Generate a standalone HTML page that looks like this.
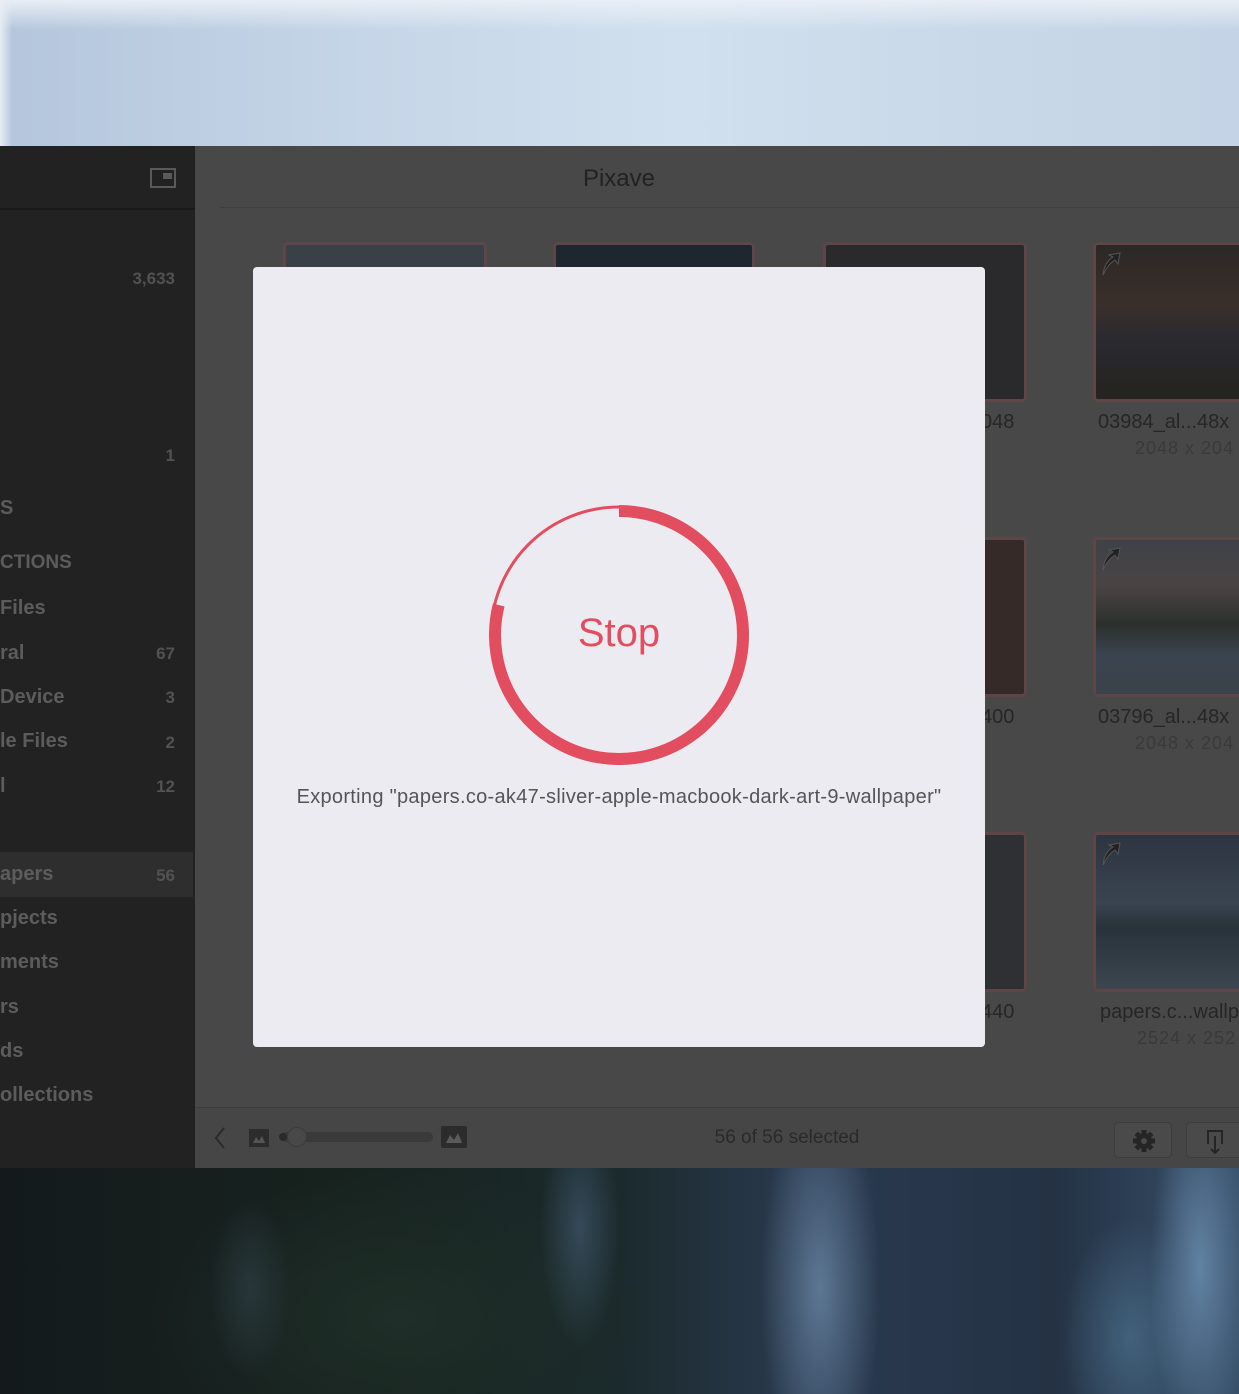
<!DOCTYPE html>
<html><head><meta charset="utf-8"><style>
*{margin:0;padding:0;box-sizing:border-box}
body{width:1239px;height:1394px;overflow:hidden;position:relative;font-family:"Liberation Sans",Helvetica,sans-serif;background:#1a2226}
.top{position:absolute;left:0;top:0;width:1239px;height:146px;background:linear-gradient(90deg,#b4c6dc 0%,#c6d6e8 30%,#d0e0ee 55%,#c8d8e8 80%,#c4d4e6 100%)}
.top:before{content:"";position:absolute;left:0;top:0;right:0;height:30px;background:linear-gradient(#e8eef6,rgba(232,238,246,0))}
.top:after{content:"";position:absolute;left:0;top:0;bottom:0;width:12px;background:linear-gradient(90deg,#e8edf3,rgba(232,238,246,0))}
.bot{position:absolute;left:0;top:1168px;width:1239px;height:226px;overflow:hidden;
background:
radial-gradient(ellipse 60px 200px at 820px 120px,rgba(110,140,170,.75),transparent),
radial-gradient(ellipse 50px 180px at 1200px 100px,rgba(110,145,180,.8),transparent),
radial-gradient(ellipse 70px 120px at 1130px 170px,rgba(80,120,150,.6),transparent),
radial-gradient(ellipse 40px 120px at 580px 60px,rgba(70,95,120,.6),transparent),
radial-gradient(ellipse 40px 90px at 250px 120px,rgba(50,65,75,.6),transparent),
radial-gradient(ellipse 250px 150px at 400px 150px,#1f2e28,transparent),
linear-gradient(90deg,#141a1c 0%,#17231f 30%,#1b2a2c 50%,#2a3a50 65%,#243244 85%,#38506a 100%)}
.sb{position:absolute;left:0;top:146px;width:195px;height:1022px;background:#222222}
.sb .hdr{position:absolute;left:0;top:62px;width:195px;height:2px;background:#1a1a1a}
.sb .t{position:absolute;left:0;color:#5c5c5c;font-size:20px;white-space:nowrap;font-weight:bold}
.sb .n{position:absolute;right:20px;color:#525252;font-size:17px;font-weight:bold}
.sb .sel{position:absolute;left:0;top:706px;width:193px;height:45px;background:#2e2e2e}
.main{position:absolute;left:195px;top:146px;width:1044px;height:1022px;background:#484848}
.title{position:absolute;left:0;top:0;width:848px;height:62px;text-align:center;line-height:66px;font-size:24px;color:#222}
.line{position:absolute;left:25px;right:0;top:61px;height:1px;background:#3e3e3e}
.bbar{position:absolute;left:0;top:961px;width:100%;height:61px;background:#464646;border-top:1px solid #3c3c3c}
.th{position:absolute;border:3px solid #5e4548;border-radius:5px;background:#2e2f32}
.lbl{position:absolute;font-size:20px;color:#262626;white-space:nowrap}
.dim{position:absolute;font-size:18px;color:#3a3a3a;white-space:nowrap;letter-spacing:1px}
.modal{position:absolute;left:253px;top:267px;width:732px;height:780px;background:#ecebf1;border-radius:4px}
.exp{position:absolute;left:0;width:100%;top:519px;text-align:center;font-size:20px;color:#555;letter-spacing:.3px;white-space:nowrap}
.btn{position:absolute;top:14px;width:58px;height:36px;border:1px solid #3c3c3c;border-radius:5px;background:#4a4a4a}
</style></head><body>
<div class="top"></div>
<div class="bot"></div>
<div class="sb">
 <svg style="position:absolute;left:150px;top:22px" width="26" height="20"><rect x="1" y="1" width="24" height="18" fill="none" stroke="#5a5a5a" stroke-width="2"/><rect x="13" y="5" width="9" height="6" fill="#5a5a5a"/></svg>
 <div class="hdr"></div>
 <div class="n" style="top:123px">3,633</div>
 <div class="n" style="top:300px">1</div>
 <div class="t" style="top:351px">S</div>
 <div class="t" style="top:406px;font-size:19px">CTIONS</div>
 <div class="t" style="top:451px">Files</div>
 <div class="t" style="top:496px">ral</div><div class="n" style="top:498px">67</div>
 <div class="t" style="top:540px">Device</div><div class="n" style="top:542px">3</div>
 <div class="t" style="top:584px">le Files</div><div class="n" style="top:587px">2</div>
 <div class="t" style="top:629px">l</div><div class="n" style="top:631px">12</div>
 <div class="sel"></div>
 <div class="t" style="top:717px">apers</div><div class="n" style="top:720px">56</div>
 <div class="t" style="top:761px">pjects</div>
 <div class="t" style="top:805px">ments</div>
 <div class="t" style="top:850px">rs</div>
 <div class="t" style="top:894px">ds</div>
 <div class="t" style="top:938px">ollections</div>
</div>
<div class="main">
 <div class="title">Pixave</div>
 <div class="line"></div>
 <div class="th" style="left:88px;top:96px;width:204px;height:160px;background:#3a4048"></div>
 <div class="th" style="left:358px;top:96px;width:202px;height:160px;background:#1e2630"></div>
 <div class="th" style="left:628px;top:96px;width:204px;height:160px;background:#2a2a2c"></div>
 <div class="th" style="left:628px;top:391px;width:204px;height:160px;background:#352a28"></div>
 <div class="th" style="left:628px;top:686px;width:204px;height:160px;background:#2e3034"></div>
 <div class="lbl" style="left:786px;top:265px">048</div>
 <div class="lbl" style="left:786px;top:560px">400</div>
 <div class="lbl" style="left:786px;top:855px">440</div>
 <div class="th" style="left:898px;top:96px;width:170px;height:160px;background:linear-gradient(#2c2826 0%,#3a2f2a 40%,#2a2a30 60%,#25231f 100%)"></div>
 <div class="th" style="left:898px;top:391px;width:170px;height:160px;background:linear-gradient(#3e4248 0%,#4a4444 30%,#2b302c 55%,#3a4450 75%,#3a424a 100%)"></div>
 <div class="th" style="left:898px;top:686px;width:170px;height:160px;background:linear-gradient(#2c3540 0%,#3a4450 45%,#28323a 60%,#3c4650 100%)"></div>
 <svg style="position:absolute;left:905px;top:105px" width="22" height="26"><path d="M3 24 C4 14 8 9 13 6 L9 4 L20 2 L18 13 L15 9 C10 12 6 17 3 24Z" fill="#222" stroke="#555" stroke-width="1"/></svg>
 <svg style="position:absolute;left:905px;top:400px" width="22" height="26"><path d="M3 24 C4 14 8 9 13 6 L9 4 L20 2 L18 13 L15 9 C10 12 6 17 3 24Z" fill="#222" stroke="#555" stroke-width="1"/></svg>
 <svg style="position:absolute;left:905px;top:695px" width="22" height="26"><path d="M3 24 C4 14 8 9 13 6 L9 4 L20 2 L18 13 L15 9 C10 12 6 17 3 24Z" fill="#222" stroke="#555" stroke-width="1"/></svg>
 <div class="lbl" style="left:903px;top:265px">03984_al...48x</div>
 <div class="dim" style="left:940px;top:292px">2048 x 204</div>
 <div class="lbl" style="left:903px;top:560px">03796_al...48x</div>
 <div class="dim" style="left:940px;top:587px">2048 x 204</div>
 <div class="lbl" style="left:905px;top:855px">papers.c...wallp</div>
 <div class="dim" style="left:942px;top:882px">2524 x 252</div>
 <div class="bbar">
  <svg style="position:absolute;left:18px;top:18px" width="14" height="24"><path d="M11 2 L3 12 L11 22" fill="none" stroke="#2a2a2a" stroke-width="2"/></svg>
  <svg style="position:absolute;left:54px;top:21px" width="20" height="18"><rect width="20" height="18" fill="#2c2c2c"/><path d="M4 14 L7 8 L10 12 L13 7 L16 14Z" fill="#555"/></svg>
  <div style="position:absolute;left:86px;top:24px;width:152px;height:10px;border-radius:5px;background:#3a3a3a"></div>
  <div style="position:absolute;left:84px;top:25px;width:8px;height:8px;border-radius:4px;background:#2a2a2a"></div>
  <div style="position:absolute;left:92px;top:19px;width:20px;height:20px;border-radius:10px;background:#484848;border:1px solid #3c3c3c"></div>
  <svg style="position:absolute;left:246px;top:18px" width="26" height="22"><rect width="26" height="22" rx="2" fill="#2c2c2c"/><path d="M5 17 L9 9 L13 14 L17 7 L21 17Z" fill="#5a5a5a"/></svg>
  <div style="position:absolute;left:0;width:1184px;top:19px;text-align:center;font-size:19px;color:#2a2a2a">56 of 56 selected</div>
  <div class="btn" style="left:919px"><svg style="position:absolute;left:16px;top:6px" width="26" height="24" viewBox="-12 -12 24 24"><g fill="#252525"><circle r="8"/><rect x="-2.5" y="-11" width="5" height="22"/><rect x="-2.5" y="-11" width="5" height="22" transform="rotate(45)"/><rect x="-2.5" y="-11" width="5" height="22" transform="rotate(90)"/><rect x="-2.5" y="-11" width="5" height="22" transform="rotate(135)"/></g><circle r="3" fill="#4a4a4a"/></svg></div>
  <div class="btn" style="left:991px"><svg style="position:absolute;left:17px;top:5px" width="22" height="28"><path d="M4 16 V3 H18 V16 M11 8 V25 M7 21 L11 25 L15 21" fill="none" stroke="#252525" stroke-width="2"/></svg></div>
 </div>
</div>
<div class="modal">
 <svg style="position:absolute;left:236px;top:238px" width="260" height="260" viewBox="0 0 260 260">
  <circle cx="130" cy="130" r="128" fill="none" stroke="#e24e60" stroke-width="3"/>
  <path d="M130 6 A124 124 0 1 1 9.7 100" fill="none" stroke="#e24e60" stroke-width="12"/>
  <text x="130" y="141" text-anchor="middle" font-family="Liberation Sans,sans-serif" font-size="40" fill="#e24e60">Stop</text>
 </svg>
 <div class="exp">Exporting "papers.co-ak47-sliver-apple-macbook-dark-art-9-wallpaper"</div>
</div>
</body></html>
